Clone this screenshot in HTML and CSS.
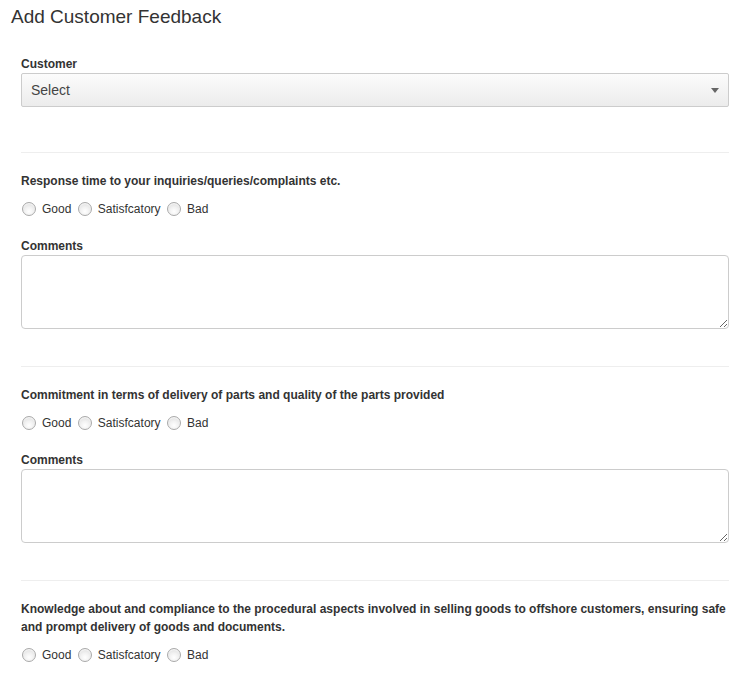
FILE: index.html
```html
<!DOCTYPE html>
<html>
<head>
<meta charset="utf-8">
<link rel="stylesheet" href="styles.css">
</head>
<body>
<h2 class="title">Add Customer Feedback</h2>
<form class="form">
  <div class="field">
    <label class="label customer-label">Customer</label>
    <div class="select">
      <span class="select-text">Select</span>
      <span class="select-arrow"></span>
    </div>
  </div>

  <hr class="sep sep-first">
  <div class="section">
    <div class="label">Response time to your inquiries/queries/complaints etc.</div>
    <div class="radios">
      <label class="radio"><input type="radio" name="q1"><span>Good</span></label>
      <label class="radio"><input type="radio" name="q1"><span>Satisfcatory</span></label>
      <label class="radio"><input type="radio" name="q1"><span>Bad</span></label>
    </div>
    <div class="label comments-label">Comments</div>
    <textarea class="textarea"></textarea>
  </div>

  <hr class="sep">
  <div class="section">
    <div class="label">Commitment in terms of delivery of parts and quality of the parts provided</div>
    <div class="radios">
      <label class="radio"><input type="radio" name="q2"><span>Good</span></label>
      <label class="radio"><input type="radio" name="q2"><span>Satisfcatory</span></label>
      <label class="radio"><input type="radio" name="q2"><span>Bad</span></label>
    </div>
    <div class="label comments-label">Comments</div>
    <textarea class="textarea"></textarea>
  </div>

  <hr class="sep">
  <div class="section">
    <div class="label">Knowledge about and compliance to the procedural aspects involved in selling goods to offshore customers, ensuring safe and prompt delivery of goods and documents.</div>
    <div class="radios">
      <label class="radio"><input type="radio" name="q3"><span>Good</span></label>
      <label class="radio"><input type="radio" name="q3"><span>Satisfcatory</span></label>
      <label class="radio"><input type="radio" name="q3"><span>Bad</span></label>
    </div>
  </div>
</form>
</body>
</html>
```
FILE: styles.css
```css
html, body {
  margin: 0;
  padding: 0;
  background: #fff;
  font-family: "Liberation Sans", Arial, sans-serif;
  color: #333;
}

.title {
  margin: 0;
  padding: 7px 0 0 11px;
  font-size: 19px;
  line-height: 20px;
  font-weight: normal;
  color: #333;
}

.form {
  padding: 28px 26px 0 21px;
}

.label {
  display: block;
  font-size: 12px;
  line-height: 18px;
  font-weight: bold;
  color: #333;
}

.customer-label {
  padding-top: 1px;
  line-height: 17px;
}

.select {
  display: flex;
  align-items: center;
  justify-content: space-between;
  box-sizing: border-box;
  height: 34px;
  padding: 0 9px 0 9px;
  border: 1px solid #ccc;
  border-radius: 2px;
  background: linear-gradient(#fcfcfc, #ececec);
}

.select-text {
  font-size: 14px;
  color: #444;
}

.select-arrow {
  width: 0;
  height: 0;
  border-left: 4px solid transparent;
  border-right: 4px solid transparent;
  border-top: 5px solid #666;
}

.sep {
  border: 0;
  border-top: 1px solid #eee;
  margin: 37px 0 0 0;
  height: 0;
}

.sep-first {
  margin-top: 45px;
}

.section .label:first-child {
  margin-top: 19px;
}

.radios {
  display: flex;
  align-items: center;
  gap: 5.5px;
  margin-top: 11px;
  height: 16px;
}

.radio {
  display: flex;
  align-items: center;
  font-size: 12px;
  color: #333;
}

.radio input {
  -webkit-appearance: none;
  appearance: none;
  box-sizing: border-box;
  width: 14px;
  height: 14px;
  margin: 0 6px 0 1px;
  border: 1px solid #aaa;
  border-radius: 50%;
  background: radial-gradient(circle at 50% 70%, #fff 0%, #f2f2f2 40%, #d8d8d8 100%);
  box-shadow: inset 0 1px 1px rgba(255,255,255,0.8);
}

.comments-label {
  margin-top: 20px;
}

.textarea {
  display: block;
  box-sizing: border-box;
  width: 100%;
  height: 74px;
  margin: 0;
  border: 1px solid #ccc;
  border-radius: 4px;
  background: #fff;
  font-family: inherit;
  resize: both;
}
```
